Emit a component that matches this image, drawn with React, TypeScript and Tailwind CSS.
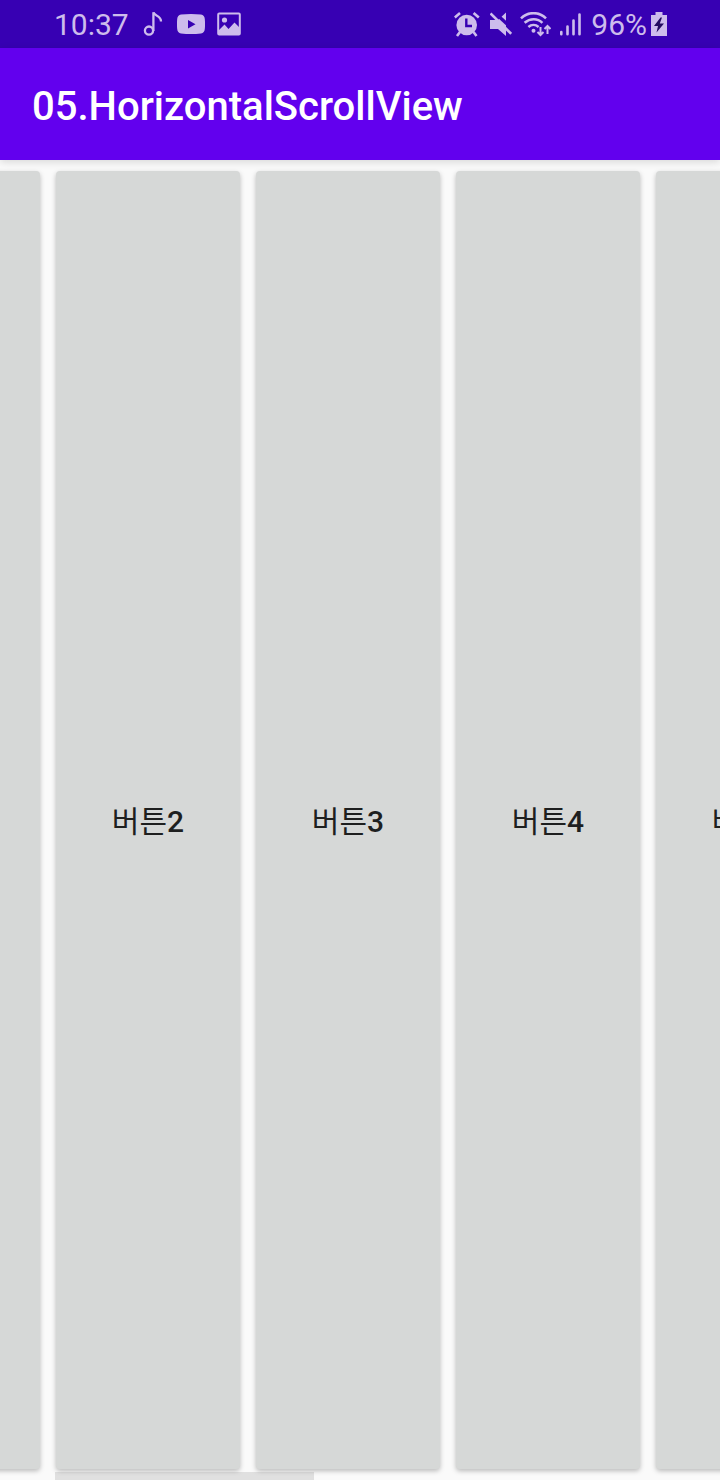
import { useLayoutEffect, useRef, useState } from 'react';

const buttonNumbers = [1, 2, 3, 4, 5, 6, 7, 8, 9, 10];
const INITIAL_SCROLL = 152;

function NoteIcon() {
  return (
    <svg width="22" height="26" viewBox="0 0 22 26" fill="none" stroke="currentColor" strokeWidth="2.300" aria-hidden="true">
      <circle cx="6" cy="19.600" r="4.100" />
      <path d="M10.400 20V1.200C10.700 5 18.200 4 18 10.500" />
    </svg>
  );
}

function VideoIcon() {
  return (
    <svg width="28" height="20" viewBox="0 0 28 20" fill="currentColor" aria-hidden="true">
      <path fillRule="evenodd" d="M4 .4Q14-.4 24 .4 27.500 1 27.800 5 28.300 10 27.800 15 27.500 19 24 19.400 14 20.500 4 19.400.5 19 .2 15-.3 10 .2 5 .5 1 4 .4ZM11 6v8.400l7.500-4.200Z" />
    </svg>
  );
}

function PictureIcon() {
  return (
    <svg width="24" height="24" viewBox="0 0 24 24" aria-hidden="true">
      <rect x="1.200" y="1.500" width="21.600" height="21" rx="1" fill="none" stroke="currentColor" strokeWidth="2" />
      <circle cx="7.500" cy="8" r="2.600" fill="currentColor" />
      <path d="M2 18 7.500 12.500l4 4.500 6-6.500L22 15v4.500H2Z" fill="currentColor" />
      <path d="M2 19h20v3H2Z" fill="currentColor" />
    </svg>
  );
}

function AlarmIcon() {
  return (
    <svg width="28" height="25" viewBox="0 0 28 25" aria-hidden="true">
      <path d="M.8 5.500 6 1M24.800 5.500 19.600 1M6 20 3 24M19.500 20 22.500 24" stroke="currentColor" strokeWidth="2.600" />
      <circle cx="12.700" cy="13" r="10.300" fill="currentColor" />
      <path d="M12.300 6.500V14H18" fill="none" stroke="#3700b3" strokeWidth="2.400" />
    </svg>
  );
}

function MuteIcon() {
  return (
    <svg width="22" height="25" viewBox="0 0 22 25" aria-hidden="true">
      <path d="M0 8H8L16 .5V24L8 17H0Z" fill="currentColor" />
      <path d="M2.500-1.500 24 18.500" stroke="#3700b3" strokeWidth="3.400" />
      <path d="M.5 1.500 21.200 21.800" stroke="currentColor" strokeWidth="2.600" />
    </svg>
  );
}

function WifiIcon() {
  return (
    <svg width="31" height="25" viewBox="0 0 31 25" fill="none" stroke="currentColor" strokeWidth="2.500" aria-hidden="true">
      <path d="M1 6.300C8-.6 19-.6 26 6.300M4.600 10.800C10 6 17.500 6 22.400 10.800M8.400 15c3-2.600 7.200-2.600 10.200 0" />
      <circle cx="13.500" cy="18.700" r="2" fill="currentColor" stroke="none" />
      <path d="M20.500 15v8M17.500 20l3 3 3-3M27.500 22v-8M24.500 17l3-3 3 3" strokeWidth="2" />
    </svg>
  );
}

function SignalIcon() {
  return (
    <svg width="22" height="24" viewBox="0 0 22 24" stroke="currentColor" strokeWidth="2.600" strokeLinecap="round" aria-hidden="true">
      <path d="M2.300 20v2.200M8.500 14.500v7.700M14.500 8.500v13.700M20.500 2.500v19.700" />
    </svg>
  );
}

function BatteryIcon() {
  return (
    <svg width="16" height="24" viewBox="0 0 16 24" aria-hidden="true">
      <path d="M4.500 0h7v3H16v21H0V3h4.500Z" fill="currentColor" />
      <path d="M9.500 5.500 3 14h4L5.500 20.500 13 11.500H8.800L11 5.500Z" fill="#230b60" />
    </svg>
  );
}

function StatusBar() {
  return (
    <div className="flex h-12 shrink-0 items-center justify-between bg-[#3700b3] pr-[53px] pl-[54px] text-[30px] leading-none text-[#cdbcec]">
      <div className="flex items-center">
        <span className="pt-0.5">10:37</span>
        <div className="ml-3.5 flex items-center gap-3">
          <NoteIcon />
          <VideoIcon />
          <PictureIcon />
        </div>
      </div>
      <div className="flex items-center gap-2.5">
        <div className="flex items-center gap-2">
          <AlarmIcon />
          <MuteIcon />
          <WifiIcon />
          <SignalIcon />
        </div>
        <div className="flex items-center gap-1">
          <span className="pt-0.5">96%</span>
          <BatteryIcon />
        </div>
      </div>
    </div>
  );
}

export default function App() {
  const scroller = useRef<HTMLDivElement>(null);
  const [thumb, setThumb] = useState({ left: 0, width: 100 });

  const updateThumb = () => {
    const el = scroller.current;
    if (!el) return;
    setThumb({
      left: (el.scrollLeft / el.scrollWidth) * 100,
      width: (el.clientWidth / el.scrollWidth) * 100,
    });
  };

  useLayoutEffect(() => {
    if (scroller.current) scroller.current.scrollLeft = INITIAL_SCROLL;
    updateThumb();
    window.addEventListener('resize', updateThumb);
    return () => window.removeEventListener('resize', updateThumb);
  }, []);

  return (
    <div className="flex h-screen flex-col bg-[#fafafa] font-[Roboto,'Noto_Sans_CJK_KR',sans-serif]">
      <StatusBar />
      <header className="z-10 flex h-28 shrink-0 items-center bg-[#6200ee] px-8 pt-1.5 shadow-[0_2px_8px_rgba(0,0,0,0.14)]">
        <h1 className="text-[40px] leading-none font-medium text-white">05.HorizontalScrollView</h1>
      </header>
      <main className="relative flex min-h-0 flex-1">
        <div
          ref={scroller}
          onScroll={updateThumb}
          className="flex min-w-0 flex-1 overflow-x-auto overflow-y-hidden [scrollbar-width:none]"
        >
          <div className="flex shrink-0 gap-4 px-2 py-[11px]">
            {buttonNumbers.map((n) => (
              <button
                key={n}
                type="button"
                className="w-46 shrink-0 rounded-sm bg-[#d6d8d7] pt-1 text-[30px] leading-none text-[#1e1f1f] shadow-[0_2px_5px_rgba(0,0,0,0.26)]"
              >
                버튼<span className="font-medium">{n}</span>
              </button>
            ))}
          </div>
        </div>
        <div
          className="pointer-events-none absolute bottom-0 h-2 bg-black/10"
          style={{ left: `${thumb.left}%`, width: `${thumb.width}%` }}
        />
      </main>
    </div>
  );
}
